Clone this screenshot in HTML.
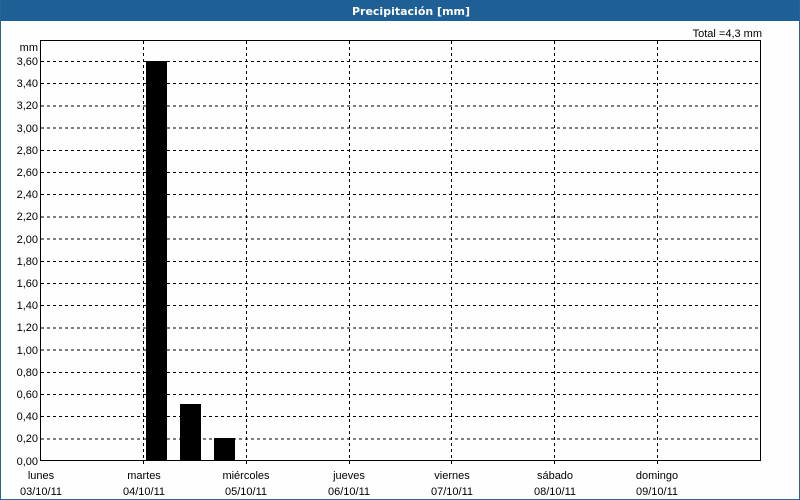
<!DOCTYPE html>
<html><head><meta charset="utf-8"><style>
html,body{margin:0;padding:0;background:#fdfefd;}
svg{display:block}
text{font-family:"Liberation Sans",sans-serif;font-size:11px;fill:#000}
</style></head><body>
<svg width="800" height="500" viewBox="0 0 800 500">
<rect x="0" y="0" width="800" height="500" fill="#fdfefd"/>
<rect x="0" y="0" width="800" height="21" fill="#1e5f95"/>
<rect x="0" y="0" width="1" height="500" fill="#2a6496"/>
<rect x="799" y="0" width="1" height="500" fill="#2a6496"/>
<rect x="0" y="499" width="800" height="1" fill="#2a6496"/>
<text x="411" y="15" text-anchor="middle" style="fill:#fff;font-weight:bold;font-family:'DejaVu Sans',sans-serif;font-size:11px">Precipitación [mm]</text>
<text x="762" y="37" text-anchor="end">Total =4,3 mm</text>
<text x="38" y="51" text-anchor="end">mm</text>
<g stroke="#000" stroke-width="1" stroke-dasharray="3,3" shape-rendering="crispEdges">
<path d="M41 61.5H760M41 83.7H760M41 105.9H760M41 128.1H760M41 150.3H760M41 172.5H760M41 194.7H760M41 216.9H760M41 239.1H760M41 261.3H760M41 283.5H760M41 305.7H760M41 327.9H760M41 350.1H760M41 372.3H760M41 394.5H760M41 416.7H760M41 438.9H760"/>
<path d="M143.5 41V465M246.5 41V465M349.5 41V465M451.5 41V465M554.5 41V465M657.5 41V465"/>
</g>
<g fill="#000">
<rect x="146" y="61" width="21" height="400"/>
<rect x="180" y="404" width="21" height="57"/>
<rect x="214" y="438" width="21" height="23"/>
</g>
<rect x="40.5" y="40.5" width="720" height="420" fill="none" stroke="#000" stroke-width="1"/>
<g text-anchor="end">
<text x="38" y="65">3,60</text><text x="38" y="87">3,40</text><text x="38" y="109">3,20</text><text x="38" y="132">3,00</text><text x="38" y="154">2,80</text><text x="38" y="176">2,60</text><text x="38" y="198">2,40</text><text x="38" y="220">2,20</text><text x="38" y="243">2,00</text><text x="38" y="265">1,80</text><text x="38" y="287">1,60</text><text x="38" y="309">1,40</text><text x="38" y="331">1,20</text><text x="38" y="354">1,00</text><text x="38" y="376">0,80</text><text x="38" y="398">0,60</text><text x="38" y="420">0,40</text><text x="38" y="442">0,20</text><text x="38" y="465">0,00</text>
</g>
<g text-anchor="middle">
<text x="41" y="479">lunes</text><text x="41" y="495">03/10/11</text>
<text x="144" y="479">martes</text><text x="144" y="495">04/10/11</text>
<text x="246" y="479">miércoles</text><text x="246" y="495">05/10/11</text>
<text x="349" y="479">jueves</text><text x="349" y="495">06/10/11</text>
<text x="452" y="479">viernes</text><text x="452" y="495">07/10/11</text>
<text x="555" y="479">sábado</text><text x="555" y="495">08/10/11</text>
<text x="657" y="479">domingo</text><text x="657" y="495">09/10/11</text>
</g>
</svg>
</body></html>
